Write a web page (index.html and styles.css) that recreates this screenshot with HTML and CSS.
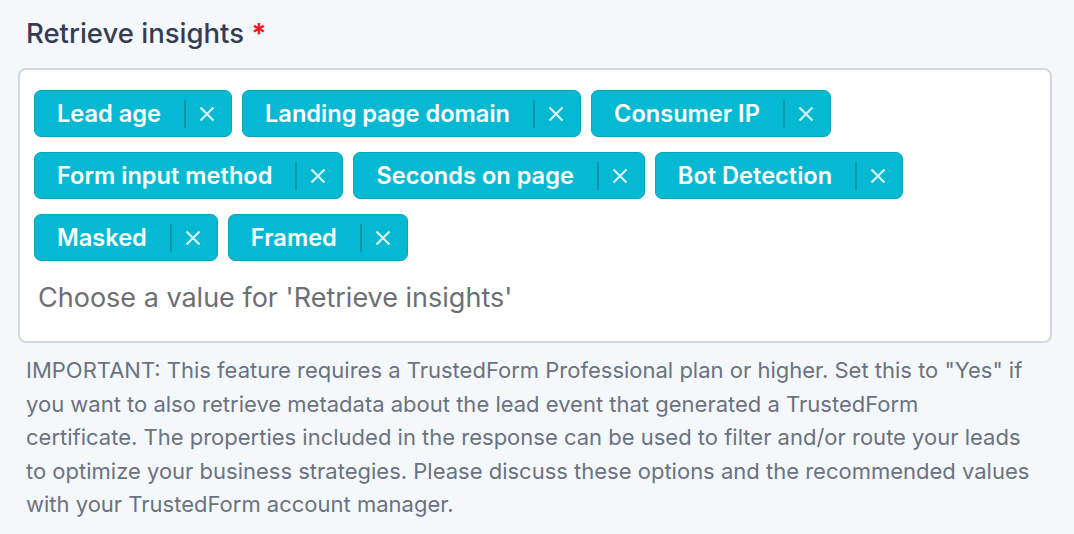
FILE: index.html
```html
<!DOCTYPE html>
<html>
<head>
<meta charset="utf-8">
<link rel="stylesheet" href="styles.css">
</head>
<body>
<div class="field">
  <label class="label">Retrieve insights <span class="req">*</span></label>
  <div class="select">
    <div class="tags">
      <span class="tag"><span class="tag-text">Lead age</span><span class="tag-sep"></span><span class="tag-x"><svg viewBox="0 0 16 16" width="16" height="16"><path d="M1.5 1.5 L14.5 14.5 M14.5 1.5 L1.5 14.5" /></svg></span></span>
      <span class="tag"><span class="tag-text">Landing page domain</span><span class="tag-sep"></span><span class="tag-x"><svg viewBox="0 0 16 16" width="16" height="16"><path d="M1.5 1.5 L14.5 14.5 M14.5 1.5 L1.5 14.5" /></svg></span></span>
      <span class="tag"><span class="tag-text">Consumer IP</span><span class="tag-sep"></span><span class="tag-x"><svg viewBox="0 0 16 16" width="16" height="16"><path d="M1.5 1.5 L14.5 14.5 M14.5 1.5 L1.5 14.5" /></svg></span></span>
      <span class="tag"><span class="tag-text">Form input method</span><span class="tag-sep"></span><span class="tag-x"><svg viewBox="0 0 16 16" width="16" height="16"><path d="M1.5 1.5 L14.5 14.5 M14.5 1.5 L1.5 14.5" /></svg></span></span>
      <span class="tag"><span class="tag-text">Seconds on page</span><span class="tag-sep"></span><span class="tag-x"><svg viewBox="0 0 16 16" width="16" height="16"><path d="M1.5 1.5 L14.5 14.5 M14.5 1.5 L1.5 14.5" /></svg></span></span>
      <span class="tag"><span class="tag-text">Bot Detection</span><span class="tag-sep"></span><span class="tag-x"><svg viewBox="0 0 16 16" width="16" height="16"><path d="M1.5 1.5 L14.5 14.5 M14.5 1.5 L1.5 14.5" /></svg></span></span>
      <span class="tag"><span class="tag-text">Masked</span><span class="tag-sep"></span><span class="tag-x"><svg viewBox="0 0 16 16" width="16" height="16"><path d="M1.5 1.5 L14.5 14.5 M14.5 1.5 L1.5 14.5" /></svg></span></span>
      <span class="tag"><span class="tag-text">Framed</span><span class="tag-sep"></span><span class="tag-x"><svg viewBox="0 0 16 16" width="16" height="16"><path d="M1.5 1.5 L14.5 14.5 M14.5 1.5 L1.5 14.5" /></svg></span></span>
    </div>
    <div class="placeholder">Choose a value for 'Retrieve insights'</div>
  </div>
  <p class="help">IMPORTANT: This feature requires a TrustedForm Professional plan or higher. Set this to "Yes" if you want to also retrieve metadata about the lead event that generated a TrustedForm certificate. The properties included in the response can be used to filter and/or route your leads to optimize your business strategies. Please discuss these options and the recommended values with your TrustedForm account manager.</p>
</div>
</body>
</html>
```

FILE: styles.css
```css
html, body {
  margin: 0;
  padding: 0;
  background: #f5f8fb;
}
body {
  font-family: "Inter", "Noto Sans", sans-serif;
}
.field {
  padding: 16px 22px 0 18px;
}
.label {
  display: block;
  padding-left: 8px;
  font-size: 27.5px;
  line-height: 34px;
  font-weight: 500;
  color: #363d52;
  margin-bottom: 18px;
}
.req {
  color: #f0171d;
  font-weight: 700;
}
.select {
  background: #fff;
  border: 2px solid #d3d8df;
  border-radius: 8px;
  padding: 20px 14px 26px 14px;
}
.tags {
  display: flex;
  flex-wrap: wrap;
  column-gap: 10px;
  row-gap: 15px;
}
.tag {
  display: inline-flex;
  align-items: center;
  height: 47px;
  box-sizing: border-box;
  background: #06b9d3;
  border: 1.5px solid #0aa4bb;
  border-radius: 7px;
  padding: 0 16px 0 22px;
  color: #fff;
  font-size: 23.6px;
  font-weight: 600;
}
.tag-text {
  line-height: 28px;
}
.tag-sep {
  width: 2px;
  height: 28px;
  background: #0796ac;
  margin-left: 23px;
  margin-right: 13px;
}
.tag-x {
  display: flex;
  align-items: center;
}
.tag-x svg path {
  stroke: #d6f2f6;
  stroke-width: 2.2;
  fill: none;
}
.placeholder {
  margin-top: 20px;
  padding-left: 4px;
  font-size: 27px;
  line-height: 34px;
  color: #6c6f73;
}
.help {
  margin: 11px 22px 0 8px;
  font-size: 22px;
  letter-spacing: 0;
  line-height: 33.5px;
  color: #6b7280;
}
```
